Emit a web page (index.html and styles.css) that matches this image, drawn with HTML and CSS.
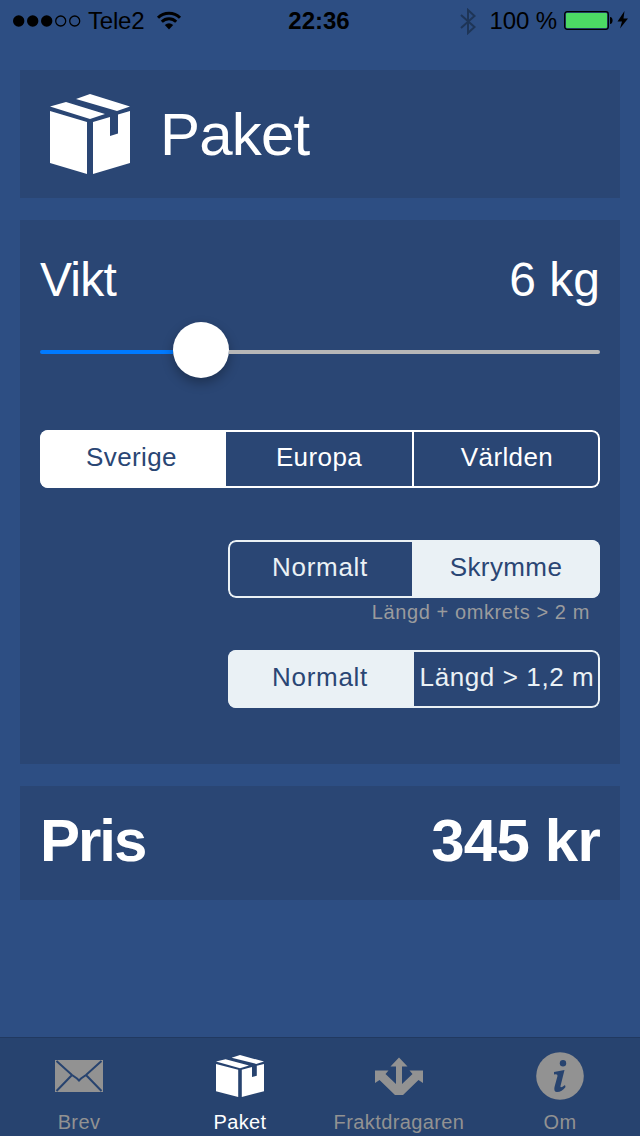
FILE: index.html
```html
<!DOCTYPE html>
<html lang="sv">

<head>
    <meta charset="UTF-8">
    <meta name="viewport" content="width=device-width, initial-scale=1.0">
    <title>Paket</title>
    <link rel="stylesheet" href="styles.css">
</head>

<body>

    <!-- shared package icon -->
    <svg class="defs" width="0" height="0">
        <symbol id="box" viewBox="0 0 80 80" preserveAspectRatio="none">
            <path d="M26 5L40 0L80 12.5L67 17ZM0 12.5L16 8L55 20L40 25ZM0 17L37 28V80L0 69ZM43 28L60 23V42L68 39.500V20.500L80 17V69L43 80Z" />
        </symbol>
    </svg>

    <header class="status">
        <div class="status-left">
            <svg width="68" height="14" viewBox="0 0 68 14">
                <circle cx="5.700" cy="7" r="5.700" />
                <circle cx="19.700" cy="7" r="5.700" />
                <circle cx="33.700" cy="7" r="5.700" />
                <circle class="ring" cx="47.700" cy="7" r="5" />
                <circle class="ring" cx="61.700" cy="7" r="5" />
            </svg>
            <span class="carrier">Tele2</span>
            <svg class="wifi" width="26" height="19" viewBox="0 0 26 19">
                <path class="wave" d="M2 6.800A15.500 15.500 0 0 1 24 6.800M5.800 10.800A10.300 10.300 0 0 1 20.200 10.800" />
                <path d="M8.800 14A6.500 6.500 0 0 1 17.200 14L13 18.500Z" />
            </svg>
        </div>
        <span class="clock">22:36</span>
        <div class="status-right">
            <svg class="bluetooth" width="16" height="27" viewBox="0 0 16 27">
                <path d="M1 7L14.500 19L8 25V2L14.500 8L1 20" />
            </svg>
            <span class="percent">100 %</span>
            <svg class="battery" width="66" height="20" viewBox="0 0 66 20">
                <rect class="ring" x=".7" y=".7" width="43.600" height="17.600" rx="2.500" />
                <rect class="charge" x="2" y="2" width="41" height="15" rx="1" />
                <path d="M46 6C49.500 6 49.500 13 46 13ZM60.500 0L53.500 10.500H58L56 17.500L64 7.500H59.500Z" />
            </svg>
        </div>
    </header>

    <main class="content">
        <section class="panel title-panel">
            <svg class="title-icon"><use href="#box" /></svg>
            <h1>Paket</h1>
        </section>

        <section class="panel options-panel">
            <div class="row weight">
                <span class="vikt">Vikt</span>
                <span>6 kg</span>
            </div>

            <div class="slider">
                <div class="slider-fill"></div>
                <div class="slider-knob"></div>
                <div class="slider-rest"></div>
            </div>

            <div class="segment region">
                <button class="active">Sverige</button>
                <button>Europa</button>
                <button>Världen</button>
            </div>

            <div class="segment small volume">
                <button>Normalt</button>
                <button class="active">Skrymme</button>
            </div>
            <p class="hint">Längd + omkrets &gt; 2 m</p>

            <div class="segment small length">
                <button class="active">Normalt</button>
                <button>Längd &gt; 1,2 m</button>
            </div>
        </section>

        <section class="panel row price">
            <span class="pris">Pris</span>
            <span>345 kr</span>
        </section>
    </main>

    <nav class="tabs">
        <a class="tab">
            <svg width="48" height="48" viewBox="0 0 48 48">
                <path d="M0 8H48V40H0Z" />
                <path class="cut" d="M1.500 9L17 23L22 26.500L24 28.500L26 26.500L31 23L46.500 9M1.500 39L17 23M46.500 39L31 23" />
            </svg>
            <span>Brev</span>
        </a>
        <a class="tab current">
            <svg width="48" height="48" viewBox="0 0 48 48">
                <use href="#box" y="3" width="48" height="42" />
            </svg>
            <span>Paket</span>
        </a>
        <a class="tab">
            <svg width="48" height="48" viewBox="0 0 48 48">
                <path d="M24 5.500L32.500 14.500H27V32L37.500 22L34.500 18.500H48V31L43.500 28L28 43H20L4.500 28L0 31V18.500H13.500L10.500 22L21 32V14.500H15.500Z" />
            </svg>
            <span>Fraktdragaren</span>
        </a>
        <a class="tab">
            <svg width="48" height="48" viewBox="0 0 48 48">
                <circle cx="24" cy="24" r="23.800" />
                <circle class="hole" cx="27" cy="11.300" r="3.200" />
                <path class="hole" d="M18 20L28.500 18L24.500 34Q24 37 29 33L29.500 35Q26 40 21 40Q17.500 40 18.500 35L21.500 24Q22 21.500 18 22.500Z" />
            </svg>
            <span>Om</span>
        </a>
    </nav>

</body>

</html>
```
FILE: styles.css
```css
* {
    margin: 0;
    padding: 0;
    box-sizing: border-box;
}

body {
    height: 1136px;
    display: flex;
    flex-direction: column;
    font-family: "Liberation Sans", Arial, sans-serif;
    background: #2d4e83;
    color: #fff;
    overflow: hidden;
}

svg {
    display: block;
    flex: none;
}

.defs {
    position: absolute;
}

/* status bar */
.status {
    height: 42px;
    padding: 0 10px 0 13px;
    display: grid;
    grid-template-columns: 1fr auto 1fr;
    align-items: center;
    color: #000;
    font-size: 24px;
    line-height: 42px;
    white-space: nowrap;
}

.status-left,
.status-right {
    display: flex;
    align-items: center;
}

.status-right {
    justify-content: flex-end;
}

.carrier {
    margin: 0 12px 0 7px;
    letter-spacing: -0.2px;
}

.wifi {
    margin-top: -2px;
}

.ring {
    fill: none;
    stroke: #000;
    stroke-width: 1.3;
}

.wave {
    fill: none;
    stroke: #000;
    stroke-width: 3;
}

.clock {
    padding-right: 5px;
    font-weight: bold;
}

.bluetooth path {
    fill: none;
    stroke: #1e3557;
    stroke-width: 2;
}

.percent {
    margin: 0 7px 0 13px;
    letter-spacing: -0.1px;
}

.charge {
    fill: #4cd964;
}

/* panels */
.content {
    flex: 1;
    padding: 28px 20px 0;
    display: flex;
    flex-direction: column;
    gap: 22px;
}

.panel {
    background: #2a4674;
}

.title-panel {
    height: 128px;
    padding: 0 30px;
    display: flex;
    align-items: center;
    gap: 30px;
}

.title-icon {
    width: 80px;
    height: 80px;
    fill: #fff;
}

h1 {
    padding-top: 2px;
    font-size: 60px;
    font-weight: normal;
    line-height: 70px;
    letter-spacing: -0.8px;
}

.options-panel {
    height: 544px;
    padding: 32px 20px 0;
    display: flex;
    flex-direction: column;
}

.row {
    display: flex;
    justify-content: space-between;
}

.weight {
    font-size: 48px;
    line-height: 56px;
}

.vikt {
    letter-spacing: -0.8px;
}

.slider {
    height: 56px;
    margin-top: 14px;
    display: flex;
    align-items: center;
}

.slider-fill,
.slider-rest {
    height: 4px;
    margin-top: 4px;
}

.slider-fill {
    width: 133px;
    background: #007aff;
    border-radius: 2px 0 0 2px;
}

.slider-rest {
    flex: 1;
    background: #b7b7b7;
    border-radius: 0 2px 2px 0;
}

.slider-knob {
    width: 56px;
    height: 56px;
    border-radius: 50%;
    background: #fff;
    box-shadow: 0 5px 12px rgba(0, 0, 0, 0.3);
}

/* segmented controls */
.segment {
    position: relative;
    height: 58px;
    display: grid;
    flex: none;
    border-radius: 8px;
    overflow: hidden;
    color: #fff;
}

/* outline lies over the segments so the filled one has no seam */
.segment::after {
    content: "";
    position: absolute;
    inset: 0;
    border: 2px solid currentColor;
    border-radius: 8px;
    pointer-events: none;
}

.segment button {
    min-width: 0;
    padding-bottom: 4px;
    border: none;
    background: none;
    color: inherit;
    font-family: inherit;
    font-size: 26px;
    letter-spacing: 0.4px;
    white-space: nowrap;
}

.segment .active {
    background: #fff;
    color: #2a4674;
}

.region {
    grid-template-columns: 186px 188px 186px;
    margin-top: 52px;
}

.region button:nth-child(2) {
    border-right: 2px solid #fff;
}

.region .active {
    padding-right: 3px;
}

.small {
    width: 372px;
    align-self: flex-end;
    color: #eaf1f5;
}

.small .active {
    background: #eaf1f5;
}

.segment.small button:first-child {
    letter-spacing: 0.7px;
}

.volume {
    grid-template-columns: 184px 188px;
    margin-top: 52px;
}

.length {
    grid-template-columns: 186px 186px;
}

.length .active {
    padding-right: 2px;
}

.length button:last-child {
    letter-spacing: 0.6px;
}

.hint {
    height: 52px;
    padding: 2px 10px 0 0;
    text-align: right;
    color: #9a9b9d;
    font-size: 20px;
    line-height: 24px;
    letter-spacing: 0.6px;
}

.price {
    height: 114px;
    padding: 20px 20px 0;
    font-size: 60px;
    font-weight: bold;
    line-height: 70px;
    letter-spacing: -0.8px;
}

.pris {
    letter-spacing: -2px;
}

/* tab bar */
.tabs {
    height: 99px;
    display: grid;
    grid-template-columns: repeat(4, 160px);
    justify-content: center;
    border-top: 1px solid #213960;
    background: #27436f;
}

.tab {
    padding-top: 14px;
    display: flex;
    flex-direction: column;
    align-items: center;
    gap: 10px;
    color: #929292;
    fill: #929292;
    font-size: 20px;
    line-height: 24px;
    letter-spacing: 0.4px;
}

.tab:nth-child(odd) {
    padding-right: 2px;
}

.current {
    color: #fff;
    fill: #fff;
}

.cut {
    fill: none;
    stroke: #27436f;
    stroke-width: 2;
}

.hole {
    fill: #27436f;
}
```
